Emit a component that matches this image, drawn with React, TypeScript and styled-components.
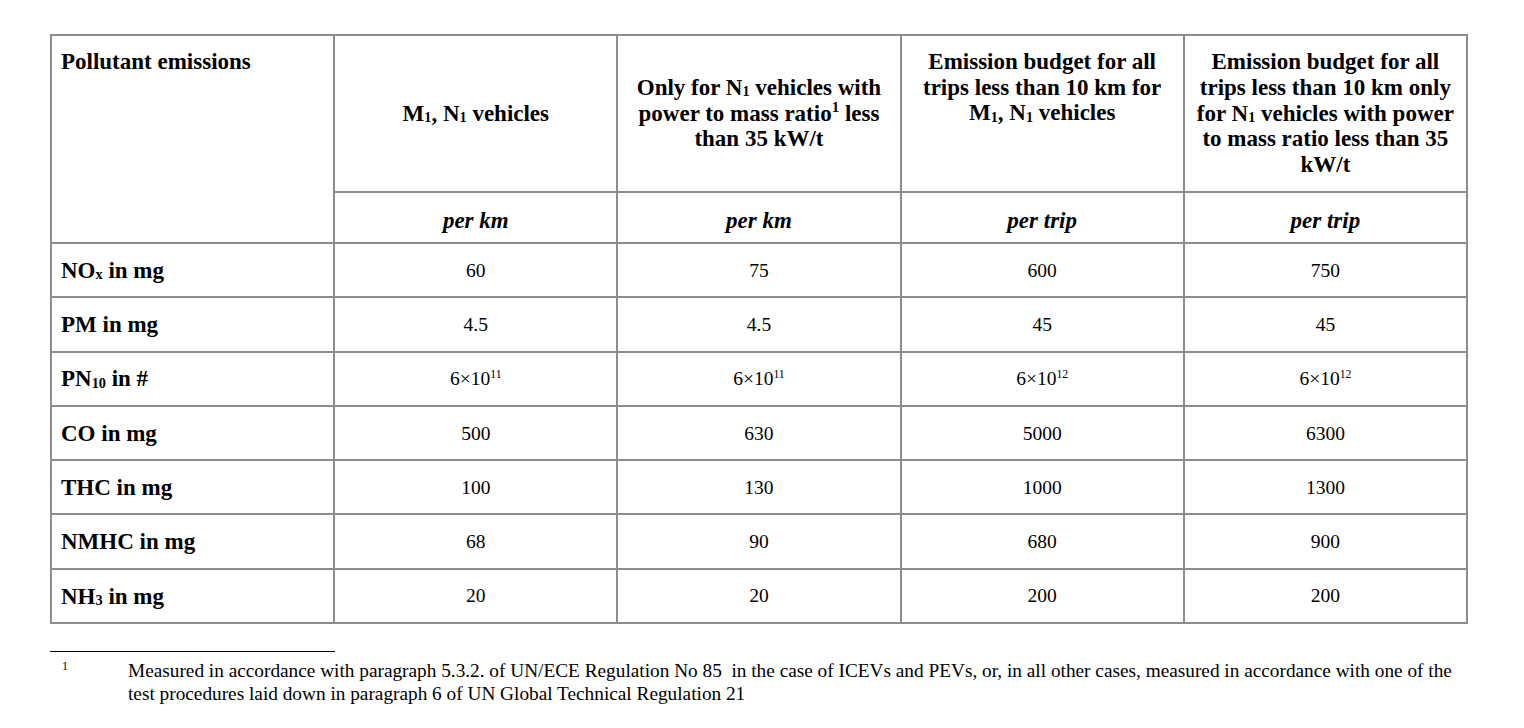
import React from 'react';
import styled, { createGlobalStyle } from 'styled-components';

const GlobalStyle = createGlobalStyle`
  html, body { margin: 0; padding: 0; background: #ffffff; }
  body { font-family: "Liberation Serif", "Times New Roman", serif; color: #000000; }
`;

const Page = styled.div`
  padding: 34px 57px 0 50px;
`;

const Table = styled.table`
  border-collapse: collapse;
  table-layout: fixed;
  width: 1418px;
`;

const HeaderRow = styled.tr`
  height: 157px;
`;

const UnitRow = styled.tr`
  height: 51px;
`;

const DataRow = styled.tr`
  height: 54.3px;
`;

const HeadCell = styled.th<{ $align?: 'left' | 'center'; $valign?: 'top' | 'middle' }>`
  border: 2px solid #8d8d8d;
  font-weight: bold;
  font-size: 23px;
  line-height: 25.7px;
  text-align: ${(p) => p.$align ?? 'center'};
  vertical-align: ${(p) => p.$valign ?? 'middle'};
  padding: ${(p) => (p.$valign === 'top' ? '13px 9px 0 9px' : '0 8px')};
`;

const UnitCell = styled.th`
  border: 2px solid #8d8d8d;
  font-weight: bold;
  font-style: italic;
  font-size: 23px;
  line-height: 25.7px;
  text-align: center;
  vertical-align: middle;
  padding: 6px 8px 0 8px;
`;

const LabelCell = styled.td`
  border: 2px solid #8d8d8d;
  font-weight: bold;
  font-size: 23px;
  line-height: 25.7px;
  text-align: left;
  vertical-align: middle;
  padding: 1px 9px 0 9px;
`;

const ValueCell = styled.td`
  border: 2px solid #8d8d8d;
  font-size: 19.5px;
  line-height: 23px;
  text-align: center;
  vertical-align: middle;
  padding: 0 8px;
`;

const Sub = styled.span`
  font-size: 0.62em;
  line-height: 0;
  position: relative;
  top: 0.08em;
`;

const Sup = styled.span<{ $size?: number }>`
  font-size: ${(p) => p.$size ?? 0.6}em;
  line-height: 0;
  position: relative;
  top: -0.6em;
`;

const Rule = styled.div`
  width: 285px;
  margin-top: 27px;
  border-top: 1px solid #000000;
`;

const Footnote = styled.div`
  display: grid;
  grid-template-columns: 78px 1fr;
  margin-top: 7px;
  font-size: 19.3px;
  line-height: 23px;
`;

const Marker = styled.span`
  font-size: 12px;
  line-height: 14px;
  padding-left: 12px;
`;

const FootText = styled.p`
  margin: 0;
  white-space: pre-wrap;
`;

type Row = { label: React.ReactNode; values: React.ReactNode[] };

const exp = (base: string, e: string) => (
  <>
    {base}
    <Sup>{e}</Sup>
  </>
);

const rows: Row[] = [
  { label: <>NO<Sub>x</Sub> in mg</>, values: ['60', '75', '600', '750'] },
  { label: 'PM in mg', values: ['4.5', '4.5', '45', '45'] },
  {
    label: <>PN<Sub>10</Sub> in #</>,
    values: [exp('6×10', '11'), exp('6×10', '11'), exp('6×10', '12'), exp('6×10', '12')],
  },
  { label: 'CO in mg', values: ['500', '630', '5000', '6300'] },
  { label: 'THC in mg', values: ['100', '130', '1000', '1300'] },
  { label: 'NMHC in mg', values: ['68', '90', '680', '900'] },
  { label: <>NH<Sub>3</Sub> in mg</>, values: ['20', '20', '200', '200'] },
];

export default function App() {
  return (
    <>
      <GlobalStyle />
      <Page>
        <Table>
          <colgroup>
            <col style={{ width: '20%' }} />
            <col style={{ width: '20%' }} />
            <col style={{ width: '20%' }} />
            <col style={{ width: '20%' }} />
            <col style={{ width: '20%' }} />
          </colgroup>
          <thead>
            <HeaderRow>
              <HeadCell rowSpan={2} $align="left" $valign="top">
                Pollutant emissions
              </HeadCell>
              <HeadCell>
                M<Sub>1</Sub>, N<Sub>1</Sub> vehicles
              </HeadCell>
              <HeadCell>
                Only for N<Sub>1</Sub> vehicles with
                <br />
                power to mass ratio<Sup $size={0.65}>1</Sup> less
                <br />
                than 35 kW/t
              </HeadCell>
              <HeadCell $valign="top">
                Emission budget for all
                <br />
                trips less than 10 km for
                <br />
                M<Sub>1</Sub>, N<Sub>1</Sub> vehicles
              </HeadCell>
              <HeadCell>
                Emission budget for all
                <br />
                trips less than 10 km only
                <br />
                for N<Sub>1</Sub> vehicles with power
                <br />
                to mass ratio less than 35
                <br />
                kW/t
              </HeadCell>
            </HeaderRow>
            <UnitRow>
              <UnitCell>per km</UnitCell>
              <UnitCell>per km</UnitCell>
              <UnitCell>per trip</UnitCell>
              <UnitCell>per trip</UnitCell>
            </UnitRow>
          </thead>
          <tbody>
            {rows.map((r, i) => (
              <DataRow key={i}>
                <LabelCell>{r.label}</LabelCell>
                {r.values.map((v, j) => (
                  <ValueCell key={j}>{v}</ValueCell>
                ))}
              </DataRow>
            ))}
          </tbody>
        </Table>
        <Rule />
        <Footnote>
          <Marker>1</Marker>
          <FootText>
            {'Measured in accordance with paragraph 5.3.2. of UN/ECE Regulation No 85  in the case of ICEVs and PEVs, or, in all other cases, measured in accordance with one of the'}
            <br />
            {'test procedures laid down in paragraph 6 of UN Global Technical Regulation 21'}
          </FootText>
        </Footnote>
      </Page>
    </>
  );
}
